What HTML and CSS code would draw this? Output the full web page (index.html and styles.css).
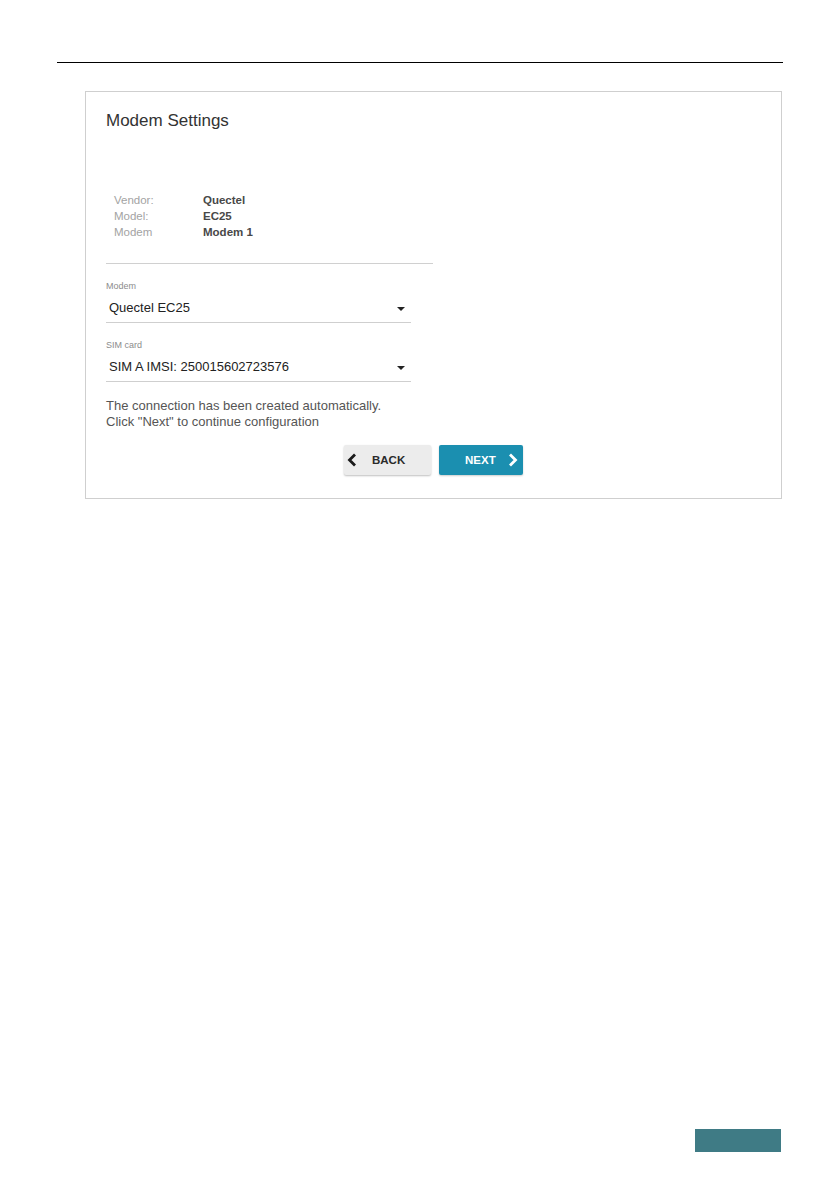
FILE: index.html
```html
<!DOCTYPE html>
<html lang="en">
<head>
  <meta charset="UTF-8" />
  <meta name="viewport" content="width=device-width, initial-scale=1.0"/>
  <title>Modem Settings</title>
  <link rel="stylesheet" href="styles.css">
</head>
<body>

  <div class="page-head"></div>

  <div class="card">
    <h2 class="card-title">Modem Settings</h2>

    <div class="info">
      <span class="info-label">Vendor:</span><span class="info-value">Quectel</span>
      <span class="info-label">Model:</span><span class="info-value">EC25</span>
      <span class="info-label">Modem</span><span class="info-value">Modem 1</span>
    </div>

    <div class="divider"></div>

    <div class="field">
      <div class="field-label">Modem</div>
      <div class="select">
        <span>Quectel EC25</span>
        <span class="caret"></span>
      </div>
    </div>

    <div class="field field-next">
      <div class="field-label">SIM card</div>
      <div class="select">
        <span>SIM A IMSI: 250015602723576</span>
        <span class="caret"></span>
      </div>
    </div>

    <p class="note">The connection has been created automatically.<br>Click "Next" to continue configuration</p>

    <div class="buttons">
      <button class="btn btn-back" type="button">
        <svg width="10" height="14" viewBox="0 0 10 14"><path d="M8 1.5 L2.5 7 L8 12.5" fill="none" stroke="#1a1a1a" stroke-width="2.8"/></svg>
        BACK
      </button>
      <button class="btn btn-next" type="button">
        NEXT
        <svg width="10" height="14" viewBox="0 0 10 14"><path d="M2 1.5 L7.5 7 L2 12.5" fill="none" stroke="#fff" stroke-width="2.8"/></svg>
      </button>
    </div>
  </div>

  <div class="page-num"></div>

</body>
</html>
```

FILE: styles.css
```css
body {
  margin: 0;
  background: #fff;
  font-family: "Liberation Sans", Arial, sans-serif;
}
.page-head {
  height: 62px;
  margin: 0 56px 0 57px;
  border-bottom: 1px solid #000;
}
.card {
  box-sizing: border-box;
  width: 697px;
  height: 408px;
  margin: 28px 0 0 85px;
  padding: 19px 0 0 20px;
  border: 1px solid #cfcfcf;
}
.card-title {
  margin: 0;
  font-size: 17px;
  line-height: 20px;
  font-weight: normal;
  color: #333;
}
.info {
  display: grid;
  grid-template-columns: 89px auto;
  margin-top: 61px;
  padding-left: 8px;
  font-size: 11.5px;
  line-height: 16px;
}
.info-label {
  color: #a3a3a3;
}
.info-value {
  font-weight: bold;
  color: #484848;
}
.divider {
  width: 327px;
  margin-top: 23px;
  border-top: 1px solid #d0d0d0;
}
.field {
  width: 305px;
  margin-top: 16px;
}
.field-next {
  margin-top: 16px;
}
.field-label {
  font-size: 9px;
  line-height: 12px;
  color: #8c8c8c;
  margin-bottom: 7px;
}
.select {
  display: flex;
  justify-content: space-between;
  align-items: center;
  padding: 0 6px 5px 3px;
  font-size: 13px;
  line-height: 18px;
  color: #222;
  border-bottom: 1px solid #cfcfcf;
}
.caret {
  width: 0;
  height: 0;
  border-left: 4px solid transparent;
  border-right: 4px solid transparent;
  border-top: 4px solid #222;
  margin-top: 1px;
}
.note {
  margin: 16px 0 0;
  font-size: 13px;
  line-height: 15.5px;
  color: #555;
}
.buttons {
  display: flex;
  justify-content: center;
  gap: 8px;
  margin-top: 16px;
  padding-right: 20px;
}
.btn {
  display: flex;
  align-items: center;
  height: 30px;
  padding: 0;
  border: none;
  border-radius: 2px;
  font-family: "Liberation Sans", Arial, sans-serif;
  font-size: 11.5px;
  font-weight: bold;
}
.btn-back {
  width: 87px;
  padding-left: 3px;
  gap: 15px;
  background: #ececec;
  color: #2a2a2a;
  box-shadow: 0 1px 2px rgba(0,0,0,0.25);
}
.btn-next {
  width: 84px;
  padding-left: 26px;
  gap: 12px;
  background: #1b8fb0;
  color: #fff;
  box-shadow: 0 1px 2px rgba(0,0,0,0.2);
}
.page-num {
  width: 86px;
  height: 23px;
  margin: 630px 0 0 695px;
  background: #3f7b85;
}
```
